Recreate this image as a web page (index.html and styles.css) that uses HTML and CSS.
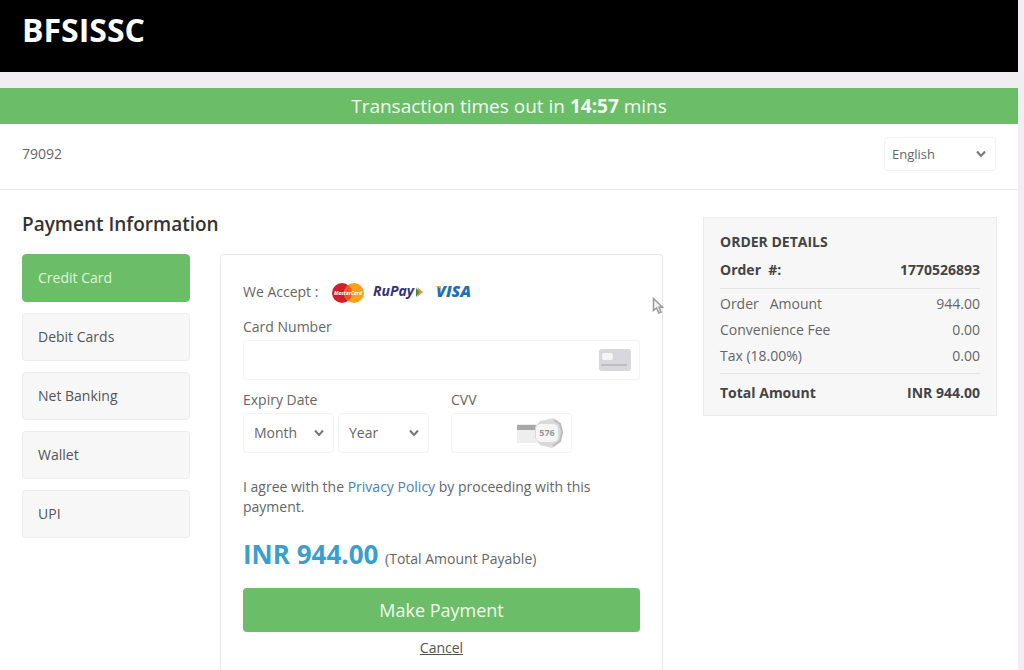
FILE: index.html
```
<!DOCTYPE html>
<html lang="en">
<head>
  <meta charset="UTF-8">
  <meta name="viewport" content="width=device-width, initial-scale=1.0">
  <title>BFSISSC - Payment</title>
  <link rel="stylesheet" href="styles.css">
</head>
<body>
  <div id="page">
    <header class="site-header">
      <h1>BFSISSC</h1>
    </header>

    <div class="timer">Transaction times out in <b>14:57</b> mins</div>

    <div class="topbar">
      <span>79092</span>
      <div class="select language">
        <select aria-label="Language">
          <option>English</option>
        </select>
        <svg class="chevron" viewBox="0 0 10 8"><path d="M1 1.5 L5 6 L9 1.5"/></svg>
      </div>
    </div>

    <main>
      <section class="payment">
        <h2>Payment Information</h2>
        <div class="columns">
          <nav class="methods">
            <button type="button" class="active">Credit Card</button>
            <button type="button">Debit Cards</button>
            <button type="button">Net Banking</button>
            <button type="button">Wallet</button>
            <button type="button">UPI</button>
          </nav>

          <form class="card-form">
            <svg class="pointer" viewBox="0 0 12 18">
              <path d="M1.5 1.5 V13.5 L4.5 11 L6.8 16 L9 15 L7 10.3 H10.5 Z"/>
            </svg>

            <div class="accept">
              <span>We Accept :</span>
              <svg class="mastercard" viewBox="0 0 34 22" role="img" aria-label="MasterCard">
                <circle cx="11" cy="11" r="10" fill="#cf1f2b"/>
                <circle cx="23" cy="11" r="10" fill="#f9a11b"/>
                <path d="M17 3 A10 10 0 0 1 17 19 A10 10 0 0 1 17 3" fill="#ea5a20"/>
                <text x="17" y="13" text-anchor="middle">MasterCard</text>
              </svg>
              <svg class="rupay" viewBox="0 0 52 20" role="img" aria-label="RuPay">
                <text x="0" y="14">RuPay</text>
                <path d="M43 6 L47 10 L43 15 Z" fill="#3f9142"/>
                <path d="M44 5 L50 10 L44 15 L46 10 Z" fill="#ee8a2c"/>
              </svg>
              <svg class="visa" viewBox="0 0 44 24" role="img" aria-label="VISA">
                <text x="1" y="17">VISA</text>
                <path d="M0 6 H5 L7 10 Q4 7 0 6 Z" fill="#f0a52c"/>
              </svg>
            </div>

            <label for="card-number">Card Number</label>
            <div class="field">
              <input type="text" id="card-number">
              <svg class="card-icon" viewBox="0 0 34 22">
                <rect x="1" y="0" width="32" height="22" rx="3" fill="#d8d8dc"/>
                <rect x="4" y="4" width="11" height="7" rx="2" fill="#f5f5f5"/>
                <rect x="3" y="15" width="26" height="2" fill="#bdbdc2"/>
              </svg>
            </div>

            <div class="details">
              <div>
                <label for="month">Expiry Date</label>
                <div class="expiry">
                  <div class="select">
                    <select id="month">
                      <option>Month</option>
                    </select>
                    <svg class="chevron" viewBox="0 0 10 8"><path d="M1 1.5 L5 6 L9 1.5"/></svg>
                  </div>
                  <div class="select">
                    <select id="year" aria-label="Expiry year">
                      <option>Year</option>
                    </select>
                    <svg class="chevron" viewBox="0 0 10 8"><path d="M1 1.5 L5 6 L9 1.5"/></svg>
                  </div>
                </div>
              </div>
              <div>
                <label for="cvv">CVV</label>
                <div class="field cvv">
                  <input type="text" id="cvv">
                  <svg class="cvv-icon" viewBox="0 0 48 30">
                    <path d="M1 6 H32 V25 H1 Z" fill="#eeeeee"/>
                    <rect x="1" y="7" width="19" height="5" fill="#a8a8a8"/>
                    <path d="M24 3 L37 0 L45 5 L47 14 L45 24 L36 30 L24 27 L19 20 V9 Z" fill="#dadada"/>
                    <path d="M38 2 L44 6 L46 14 L44 23 L37 28" fill="none" stroke="#bcbcbc" stroke-width="2"/>
                    <rect x="20" y="6" width="22" height="18" rx="5" fill="#f5f5f5"/>
                    <text x="31" y="18" text-anchor="middle">576</text>
                  </svg>
                </div>
              </div>
            </div>

            <p class="agree">I agree with the <a href="#">Privacy Policy</a> by proceeding with this payment.</p>

            <p class="payable"><b>INR 944.00</b> (Total Amount Payable)</p>

            <button type="submit" class="pay">Make Payment</button>
            <a href="#" class="cancel">Cancel</a>
          </form>
        </div>
      </section>

      <aside class="order">
        <h3>ORDER DETAILS</h3>
        <table>
          <tbody>
            <tr class="strong"><th>Order&nbsp; #:</th><td>1770526893</td></tr>
          </tbody>
          <tbody class="amounts">
            <tr><th>Order&nbsp;&nbsp; Amount</th><td>944.00</td></tr>
            <tr><th>Convenience Fee</th><td>0.00</td></tr>
            <tr><th>Tax (18.00%)</th><td>0.00</td></tr>
          </tbody>
          <tbody>
            <tr class="strong total"><th>Total Amount</th><td>INR 944.00</td></tr>
          </tbody>
        </table>
      </aside>
    </main>
  </div>
</body>
</html>
```

FILE: styles.css
```
* {
  box-sizing: border-box;
}

body {
  margin: 0;
  background-color: #f0eef1;
  color: #666666;
  font-family: "Open Sans", "Noto Sans", sans-serif;
  font-size: 14px;
  line-height: 20px;
}

h1, h2, h3, p {
  margin: 0;
}

button, input, select {
  font: inherit;
  color: inherit;
}

#page {
  display: flex;
  flex-direction: column;
  min-height: 100vh;
  margin-right: 6px;
}

.site-header {
  height: 72px;
  padding: 10px 22px;
  background-color: #000000;
  color: #ffffff;
}

.site-header h1 {
  font-size: 32px;
  line-height: 40px;
}

.timer {
  margin-top: 16px;
  padding: 4px;
  background-color: #6bbd68;
  color: #f4fbf3;
  font-size: 19px;
  line-height: 28px;
  text-align: center;
}

.topbar {
  display: flex;
  justify-content: space-between;
  align-items: flex-start;
  height: 66px;
  padding: 13px 22px;
  background-color: #ffffff;
  border-bottom: 1px solid #e8e8e8;
}

.topbar > span {
  line-height: 34px;
}

/* Drop-downs */
.select {
  position: relative;
  width: 91px;
}

.select select {
  display: block;
  width: 100%;
  height: 40px;
  padding: 0 10px;
  appearance: none;
  background-color: #ffffff;
  border: 1px solid #f3f3f3;
  border-radius: 4px;
}

.chevron {
  position: absolute;
  top: 50%;
  right: 10px;
  width: 10px;
  height: 8px;
  margin-top: -4px;
  fill: none;
  stroke: #777777;
  stroke-width: 2;
  pointer-events: none;
}

.language {
  width: 112px;
}

.language select {
  height: 34px;
  padding: 0 7px;
  font-size: 13px;
}

main {
  flex: 1;
  display: flex;
  gap: 40px;
  padding: 24px 21px 0 22px;
  background-color: #ffffff;
}

.payment {
  flex: 1;
  display: flex;
  flex-direction: column;
}

.payment h2 {
  margin-bottom: 20px;
  color: #333333;
  font-size: 19px;
  font-weight: 600;
  line-height: 20px;
}

.columns {
  flex: 1;
  display: flex;
  gap: 30px;
}

/* Payment methods */
.methods {
  display: flex;
  flex-direction: column;
  gap: 11px;
  width: 168px;
}

.methods button {
  height: 48px;
  padding: 0 15px;
  background-color: #f7f7f8;
  border: 1px solid #ececee;
  border-radius: 4px;
  color: #555555;
  text-align: left;
  cursor: pointer;
}

.methods .active {
  background-color: #6bbd68;
  border-color: #6bbd68;
  color: #dff5dc;
}

/* Card form */
.card-form {
  position: relative;
  flex: 1;
  padding: 26px 22px 0;
  border: 1px solid #e8e8e8;
  border-bottom: none;
  border-radius: 4px 4px 0 0;
}

.card-form label {
  display: block;
  margin-bottom: 3px;
}

.pointer {
  position: absolute;
  top: 42px;
  right: -2px;
  width: 12px;
  height: 18px;
  fill: #f4f4f4;
  stroke: #999999;
  stroke-width: 1.5;
}

.accept {
  display: flex;
  align-items: center;
  height: 22px;
  margin-bottom: 14px;
}

.mastercard {
  width: 34px;
  height: 22px;
  margin: 2px 8px 0 13px;
}

.mastercard text {
  fill: #ffffff;
  font-size: 5px;
  font-style: italic;
  font-weight: bold;
}

.rupay {
  width: 52px;
  height: 20px;
  margin-right: 10px;
}

.rupay text {
  fill: #35327c;
  font-size: 14px;
  font-style: italic;
  font-weight: bold;
}

.visa {
  width: 44px;
  height: 24px;
}

.visa text {
  fill: #1f6fb5;
  font-size: 16px;
  font-style: italic;
  font-weight: 800;
}

.field {
  position: relative;
}

.field input {
  display: block;
  width: 100%;
  height: 40px;
  padding: 0 50px 0 10px;
  background-color: #ffffff;
  border: 1px solid #f3f3f3;
  border-radius: 4px;
}

.field svg {
  position: absolute;
  top: 50%;
  right: 8px;
  transform: translateY(-50%);
}

.card-icon {
  width: 34px;
  height: 22px;
}

.cvv {
  width: 121px;
}

.cvv-icon {
  width: 48px;
  height: 30px;
}

.cvv-icon text {
  fill: #999999;
  font-size: 9px;
  font-weight: bold;
}

.details {
  display: flex;
  gap: 22px;
  margin-top: 10px;
}

.expiry {
  display: flex;
  gap: 4px;
}

.agree {
  margin-top: 24px;
}

.agree a {
  color: #4a80b5;
  text-decoration: none;
}

.payable {
  margin-top: 20px;
  line-height: 34px;
}

.payable b {
  margin-right: 3px;
  color: #3a9fc9;
  font-size: 26px;
}

.pay {
  display: block;
  width: 100%;
  height: 44px;
  margin: 12px 0 6px;
  background-color: #6bbd68;
  border: none;
  border-radius: 4px;
  color: #f0faef;
  font-size: 18px;
  cursor: pointer;
}

.cancel {
  display: block;
  color: #555555;
  text-align: center;
}

/* Order summary */
.order {
  align-self: flex-start;
  width: 294px;
  margin-top: 3px;
  padding: 14px 16px 2px;
  background-color: #f7f7f8;
  border: 1px solid #ececee;
}

.order h3 {
  color: #444444;
  font-size: 14px;
  line-height: 20px;
}

.order table {
  width: 100%;
  border-collapse: collapse;
}

.order th,
.order td {
  padding: 3px 0;
  font-weight: normal;
  text-align: left;
}

.order td {
  text-align: right;
}

.order .strong th,
.order .strong td {
  height: 36px;
  color: #444444;
  font-weight: bold;
}

.order .total th,
.order .total td {
  height: 40px;
}

.amounts {
  border-top: 1px solid #e4e4e6;
  border-bottom: 1px solid #e4e4e6;
}

.order .amounts tr:first-child > * {
  padding-top: 5px;
}

.order .amounts tr:last-child > * {
  padding-bottom: 7px;
}
```
